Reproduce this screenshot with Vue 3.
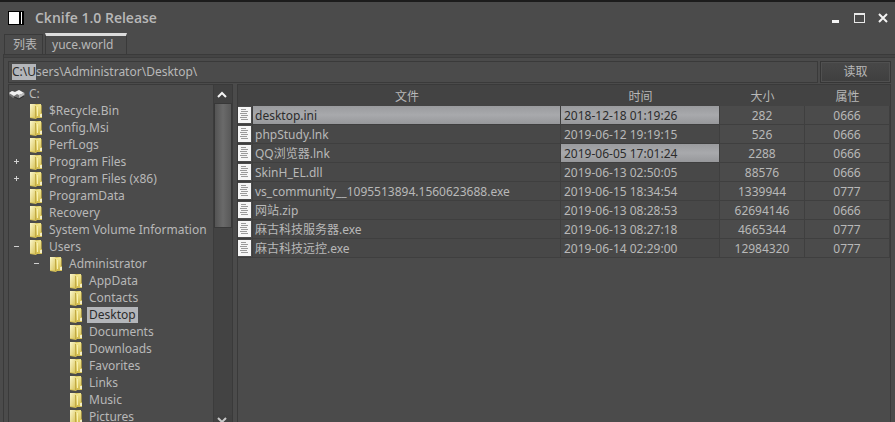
<script setup>
import { onMounted, ref } from 'vue'

const path = ref('C:\\Users\\Administrator\\Desktop\\')
const pathInput = ref(null)

const nodes = [
  { name: '$Recycle.Bin', level: 1 },
  { name: 'Config.Msi', level: 1 },
  { name: 'PerfLogs', level: 1 },
  { name: 'Program Files', level: 1, toggle: '+' },
  { name: 'Program Files (x86)', level: 1, toggle: '+' },
  { name: 'ProgramData', level: 1 },
  { name: 'Recovery', level: 1 },
  { name: 'System Volume Information', level: 1 },
  { name: 'Users', level: 1, toggle: '-' },
  { name: 'Administrator', level: 2, toggle: '-' },
  { name: 'AppData', level: 3 },
  { name: 'Contacts', level: 3 },
  { name: 'Desktop', level: 3, selected: true },
  { name: 'Documents', level: 3 },
  { name: 'Downloads', level: 3 },
  { name: 'Favorites', level: 3 },
  { name: 'Links', level: 3 },
  { name: 'Music', level: 3 },
  { name: 'Pictures', level: 3 },
]

const files = [
  { name: 'desktop.ini', time: '2018-12-18 01:19:26', size: '282', attr: '0666', nameOn: true, timeOn: true },
  { name: 'phpStudy.lnk', time: '2019-06-12 19:19:15', size: '526', attr: '0666' },
  { name: 'QQ浏览器.lnk', time: '2019-06-05 17:01:24', size: '2288', attr: '0666', timeOn: true },
  { name: 'SkinH_EL.dll', time: '2019-06-13 02:50:05', size: '88576', attr: '0666' },
  { name: 'vs_community__1095513894.1560623688.exe', time: '2019-06-15 18:34:54', size: '1339944', attr: '0777' },
  { name: '网站.zip', time: '2019-06-13 08:28:53', size: '62694146', attr: '0666' },
  { name: '麻古科技服务器.exe', time: '2019-06-13 08:27:18', size: '4665344', attr: '0777' },
  { name: '麻古科技远控.exe', time: '2019-06-14 02:29:00', size: '12984320', attr: '0777' },
]

onMounted(() => {
  pathInput.value.focus()
  pathInput.value.setSelectionRange(0, 4)
})
</script>

<template>
  <div class="window">
    <svg class="defs" width="0" height="0" aria-hidden="true">
      <defs>
        <linearGradient id="folder-left" x1="0" y1="0" x2="1" y2="1">
          <stop offset="0" stop-color="#fbf7cc" />
          <stop offset="1" stop-color="#d6c155" />
        </linearGradient>
        <linearGradient id="folder-right" x1="0" y1="0" x2="0" y2="1">
          <stop offset="0" stop-color="#f3e994" />
          <stop offset="1" stop-color="#d2bb4c" />
        </linearGradient>
      </defs>
    </svg>

    <header class="titlebar">
      <svg class="app-icon" width="16" height="14" viewBox="0 0 16 14" aria-hidden="true">
        <rect width="16" height="14" fill="#000" />
        <rect x="1" y="1" width="10" height="12" fill="#fff" />
        <rect x="13" y="1" width="1" height="12" fill="#fff" />
      </svg>
      <h1>Cknife 1.0 Release</h1>
      <div class="controls">
        <button type="button" aria-label="Minimize">
          <svg width="12" height="12" viewBox="0 0 12 12"><rect x="3" y="8" width="7" height="3" fill="#f4f4f4" /></svg>
        </button>
        <button type="button" aria-label="Maximize">
          <svg width="12" height="12" viewBox="0 0 12 12"><path d="M1 1.5h11M1.5 1v10M11.500 1v10M1 10.500h11M1 2.500h11" stroke="#e8e8e8" fill="none" /></svg>
        </button>
        <button type="button" aria-label="Close">
          <svg width="12" height="12" viewBox="0 0 12 12"><path d="M2 2l8 8M10 2l-8 8" stroke="#f4f4f4" stroke-width="2" fill="none" /></svg>
        </button>
      </div>
    </header>

    <nav class="tabs">
      <button type="button" class="tab">列表</button>
      <button type="button" class="tab active">yuce.world</button>
    </nav>

    <main class="panel">
      <form class="pathbar" @submit.prevent>
        <input ref="pathInput" v-model="path" type="text" aria-label="Path" spellcheck="false" />
        <button type="submit">读取</button>
      </form>

      <div class="split">
        <aside class="tree-pane">
          <ul class="tree">
            <li class="node root">
              <svg width="16" height="12" viewBox="0 0 16 12" aria-hidden="true">
                <path d="M0 5l3-2 3 1 4-2 6 3v2l-6 4-3-2-3 1-4-3z" fill="#777" />
                <path d="M0 5l3-2 3 1 4-2 5 3-5 2-2-1-3 2z" fill="#f2f2f2" />
                <path d="M10 7l5-2v2l-5 3z" fill="#bdbdbd" />
                <path d="M5 9l5 2 5-3" stroke="#303030" fill="none" />
              </svg>
              <span class="label">C:</span>
            </li>
            <li v-for="node in nodes" :key="node.name" class="node" :class="'level-' + node.level">
              <button v-if="node.toggle" type="button" class="toggle" :aria-label="'Toggle ' + node.name">
                <svg width="7" height="7" viewBox="0 0 7 7">
                  <path :d="node.toggle === '+' ? 'M1 3.500h5M3.500 1v5' : 'M1 3.500h5'" stroke="#d0d0d0" />
                </svg>
              </button>
              <span v-else class="toggle"></span>
              <svg width="14" height="16" viewBox="0 0 14 16" aria-hidden="true">
                <path d="M1 1h11v1l1 1v12H8l-1 1-6-1z" fill="#d3bf57" />
                <path d="M1 1h5l1 1v13l-6-1z" fill="url(#folder-left)" />
                <path d="M6 3h1v12H6z" fill="#c2aa45" />
                <path d="M7 2l5-1v13l-4 1H7z" fill="url(#folder-right)" />
                <path d="M8 4h1v9H8z" fill="#f8f0ae" />
                <path d="M11 11h2v3h-2z" fill="#f3edc4" />
                <path d="M12 3h1v7h-1z" fill="#9d8c46" />
              </svg>
              <span class="label" :class="{ selected: node.selected }">{{ node.name }}</span>
            </li>
          </ul>
          <div class="scrollbar">
            <button type="button" aria-label="Scroll up">
              <svg width="10" height="7" viewBox="0 0 10 7"><path d="M1 6l4-4 4 4" stroke="#f4f4f4" stroke-width="2" fill="none" /></svg>
            </button>
            <div class="track"><div class="thumb"></div></div>
            <button type="button" class="down" aria-label="Scroll down">
              <svg width="10" height="7" viewBox="0 0 10 7"><path d="M1 1l4 4 4-4" stroke="#c8c8c8" stroke-width="2" fill="none" /></svg>
            </button>
          </div>
        </aside>

        <section class="file-pane">
          <table>
            <colgroup>
              <col class="c-icon" />
              <col />
              <col class="c-time" />
              <col class="c-small" />
              <col class="c-small" />
            </colgroup>
            <thead>
              <tr>
                <th></th>
                <th>文件</th>
                <th>时间</th>
                <th>大小</th>
                <th>属性</th>
              </tr>
            </thead>
            <tbody>
              <tr v-for="file in files" :key="file.name">
                <td class="icon">
                  <svg width="13" height="16" viewBox="0 0 13 16" aria-hidden="true">
                    <rect width="13" height="16" fill="#f6f6f6" />
                    <path d="M3 2.500h5M3 4.500h7M2 6.500h7M3 8.500h7M2 10.500h7M3 12.500h7" stroke="#9a9a9a" />
                  </svg>
                </td>
                <td class="name" :class="{ on: file.nameOn }">{{ file.name }}</td>
                <td class="time" :class="{ on: file.timeOn }">{{ file.time }}</td>
                <td class="num">{{ file.size }}</td>
                <td class="num">{{ file.attr }}</td>
              </tr>
            </tbody>
          </table>
        </section>
      </div>
    </main>
  </div>
</template>

<style>
body {
  margin: 0;
  background: #4b4b4b;
}
</style>

<style scoped>
* {
  box-sizing: border-box;
}

.window {
  display: flex;
  flex-direction: column;
  height: 100vh;
  overflow: hidden;
  border-top: 2px solid #1c1c1c;
  background: #4b4b4b;
  color: #b8b8b8;
  font-family: "Noto Sans", "Noto Sans CJK SC", sans-serif;
  font-size: 12px;
  line-height: 16px;
}

button,
input {
  margin: 0;
  padding: 0;
  border: 0;
  background: none;
  color: inherit;
  font: inherit;
}

svg {
  display: block;
  flex: none;
}

.titlebar {
  display: flex;
  align-items: center;
  gap: 11px;
  height: 31px;
  flex: none;
  padding: 0 6px 0 8px;
}

h1 {
  flex: 1;
  margin: 0;
  font-family: "Open Sans", "Noto Sans", sans-serif;
  font-size: 14px;
  line-height: 20px;
  font-weight: 600;
}

.controls {
  display: flex;
  gap: 12px;
}

.controls button {
  width: 12px;
  height: 12px;
}

.tabs {
  display: flex;
  align-items: flex-end;
  gap: 2px;
  height: 21px;
  flex: none;
  padding-left: 4px;
}

.tab {
  height: 20px;
  padding: 0 5px 0 8px;
  border: 1px solid #3a3a3a;
  border-bottom: 0;
}

.tab.active {
  height: 21px;
  padding: 0 13px 0 6px;
  border-top: 3px solid #dcdcdc;
}

.panel {
  display: flex;
  flex: 1;
  flex-direction: column;
  min-height: 0;
  margin-left: 3px;
  padding: 4px 4px 0 4px;
  border: 1px solid #3a3a3a;
  border-width: 1px 0 0 1px;
  box-shadow: inset 0 2px 0 #444, inset 0 3px 0 #3c3c3c;
}

.pathbar {
  display: flex;
  flex: none;
  gap: 2px;
  height: 24px;
  padding-top: 2px;
}

.pathbar input {
  flex: 1;
  min-width: 0;
  padding: 0 3px;
  border: 1px solid #3a3a3a;
  outline: 0;
}

.pathbar input::selection {
  background: #b4b6ba;
  color: #2c2c2c;
}

.pathbar button {
  width: 71px;
  border: 1px solid #363636;
  background: linear-gradient(#484848, #3f3f3f);
  box-shadow: inset 0 0 0 1px #505050;
}

.split {
  display: flex;
  flex: 1;
  gap: 4px;
  min-height: 0;
  padding-top: 1px;
}

.tree-pane {
  display: flex;
  width: 225px;
  flex: none;
  border: 1px solid #3a3a3a;
  border-bottom: 0;
}

.tree {
  flex: 1;
  min-width: 0;
  margin: 0;
  padding: 0;
  overflow: hidden;
  list-style: none;
}

.node {
  display: flex;
  align-items: center;
  gap: 4px;
  height: 17px;
  white-space: nowrap;
}

.root {
  gap: 2px;
}

.level-1 {
  padding-left: 4px;
}

.level-2 {
  padding-left: 24px;
}

.level-3 {
  padding-left: 44px;
}

.toggle {
  width: 12px;
  flex: none;
}

.label {
  padding: 0 2px;
}

.label.selected {
  background: #b4b6ba;
  color: #2c2c2c;
}

.scrollbar {
  display: flex;
  width: 19px;
  flex: none;
  flex-direction: column;
  background: #434343;
  border-left: 1px solid #3c3c3c;
}

.scrollbar button {
  display: grid;
  place-items: center;
  height: 18px;
  flex: none;
  padding-right: 2px;
  background: #414141;
}

.scrollbar .down {
  height: 7px;
  padding-top: 2px;
  place-items: start center;
  overflow: hidden;
}

.track {
  flex: 1;
  min-height: 0;
}

.thumb {
  height: 40%;
  border: 1px solid #383838;
  background: linear-gradient(90deg, #545454, #6a6a6a 50%, #585858);
}

.file-pane {
  flex: 1;
  min-width: 0;
  border: 1px solid #3a3a3a;
  border-bottom: 0;
}

table {
  width: 100%;
  border-spacing: 0;
  table-layout: fixed;
}

.c-icon {
  width: 15px;
}

.c-time {
  width: 159px;
}

.c-small {
  width: 85px;
}

th {
  height: 21px;
  padding: 2px 0 0;
  background: #434343;
  font-weight: 400;
  text-align: center;
}

td {
  height: 19px;
  padding: 1px 3px 0;
  border-right: 1px solid #3f3f3f;
  border-bottom: 1px solid #3f3f3f;
  overflow: hidden;
  white-space: nowrap;
}

td.icon {
  padding: 0;
}

td.name {
  padding-left: 2px;
}

td.name,
td.time {
  background: #484848;
}

td.on {
  background: linear-gradient(#9a9b9e, #a8a9ac 50%, #97989b);
  color: #2c2c2c;
}

.num {
  text-align: center;
}
</style>
